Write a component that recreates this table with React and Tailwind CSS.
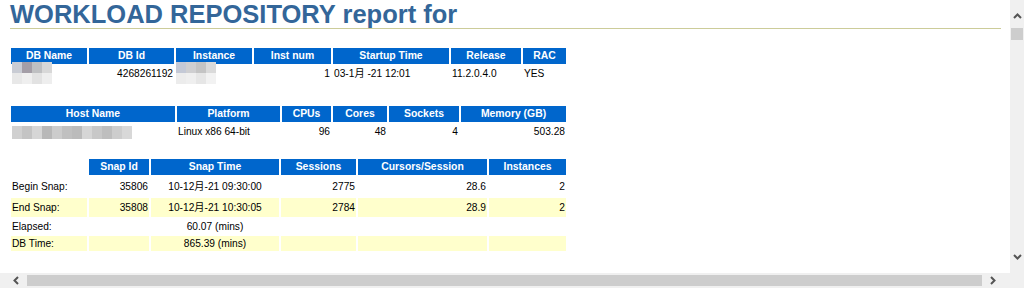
import React from 'react';

const FONT = { fontFamily: '"Liberation Sans", Arial, "Noto Sans CJK SC", sans-serif' };

const Chevron = ({ dir }) => {
  const d = {
    up: 'M1 6 L4.5 2.5 L8 6',
    down: 'M1 3 L4.5 6.5 L8 3',
    left: 'M6 1 L2.5 4.5 L6 8',
    right: 'M3 1 L6.5 4.5 L3 8',
  }[dir];
  return (
    <svg width="9" height="9" viewBox="0 0 9 9" className="block">
      <path d={d} fill="none" stroke="#555555" strokeWidth="2" />
    </svg>
  );
};

// pixelated redaction blocks, as in the screenshot
const Mosaic = ({ rows, size = 10, h }) => (
  <div className="flex flex-col blur-[0.6px]">
    {rows.map((r, i) => (
      <div key={i} className="flex">
        {r.map((c, j) => (
          <div key={j} style={{ background: c, width: size, height: h || size }} />
        ))}
      </div>
    ))}
  </div>
);

const Th = ({ children, empty }) => (
  <div
    className={
      empty
        ? 'h-[16px]'
        : 'h-[16px] bg-[#0066cc] text-white font-bold text-[10.4px] flex items-center justify-center whitespace-nowrap'
    }
  >
    {children}
  </div>
);

const Td = ({ children, align = 'left', h = 'h-[16px]', bg = '' }) => {
  const j = align === 'right' ? 'justify-end' : align === 'center' ? 'justify-center' : 'justify-start';
  return (
    <div className={`${h} ${bg} ${j} flex items-center px-[1px] text-[10.2px] text-black whitespace-nowrap`}>
      {children}
    </div>
  );
};

export default function App() {
  const Y = 'bg-[#ffffcc]';
  return (
    <div
      className="w-[1024px] h-[288px] grid grid-cols-[1010px_14px] grid-rows-[273px_15px] bg-white overflow-hidden"
      style={FONT}
    >
      <main className="overflow-hidden pl-[10px] pr-[9px]">
        <h1 className="text-[25.5px] leading-[28px] font-bold text-[#336699] border-b border-[#cccc99] whitespace-nowrap">
          WORKLOAD REPOSITORY report for
        </h1>

        {/* database / instance */}
        <div className="mt-[19px] ml-[1px] grid grid-cols-[76px_85px_76px_77px_116px_70px_43px] gap-[2px]">
          <Th>DB Name</Th>
          <Th>DB Id</Th>
          <Th>Instance</Th>
          <Th>Inst num</Th>
          <Th>Startup Time</Th>
          <Th>Release</Th>
          <Th>RAC</Th>
          <Td>
            <div className="-mt-[2px]">
              <Mosaic
                size={10}
                h={11}
                rows={[
                  ['#c9ccd4', '#a49ea7', '#bfc0c2', '#d8d8d8'],
                  ['#e8e8e8', '#efefef', '#e2e2e2', '#eeeeee'],
                ]}
              />
            </div>
          </Td>
          <Td align="right">4268261192</Td>
          <Td>
            <div className="-ml-[1px] -mt-[2px]">
              <Mosaic
                size={10}
                h={11}
                rows={[
                  ['#c4c9d6', '#cfcfd1', '#c4c4c4', '#dadada'],
                  ['#ececec', '#efefef', '#e6e6e6', '#f2f2f2'],
                ]}
              />
            </div>
          </Td>
          <Td align="right">1</Td>
          <Td>03-1月 -21 12:01</Td>
          <Td>11.2.0.4.0</Td>
          <Td>YES</Td>
        </div>

        {/* host */}
        <div className="mt-[24px] ml-[1px] grid grid-cols-[164px_103px_49px_54px_70px_105px] gap-[2px]">
          <Th>Host Name</Th>
          <Th>Platform</Th>
          <Th>CPUs</Th>
          <Th>Cores</Th>
          <Th>Sockets</Th>
          <Th>Memory (GB)</Th>
          <Td>
            <Mosaic
              h={13}
              rows={[
                ['#d0d0d0', '#c4c4c4', '#d6d6d6', '#b8b8b8', '#cccccc', '#c0c0c0', '#bbbbbb', '#d6d6d6', '#c8c8c8', '#bebebe', '#cdcdcd', '#d8d8d8'],
              ]}
            />
          </Td>
          <Td>Linux x86 64-bit</Td>
          <Td align="right">96</Td>
          <Td align="right">48</Td>
          <Td align="right">4</Td>
          <Td align="right">503.28</Td>
        </div>

        {/* snapshots */}
        <div className="mt-[19px] ml-[1px] grid grid-cols-[76px_60px_128px_75px_129px_77px] gap-[2px]">
          <Th empty />
          <Th>Snap Id</Th>
          <Th>Snap Time</Th>
          <Th>Sessions</Th>
          <Th>Cursors/Session</Th>
          <Th>Instances</Th>

          <Td h="h-[19px]">Begin Snap:</Td>
          <Td h="h-[19px]" align="right">35806</Td>
          <Td h="h-[19px]" align="center">10-12月-21 09:30:00</Td>
          <Td h="h-[19px]" align="right">2775</Td>
          <Td h="h-[19px]" align="right">28.6</Td>
          <Td h="h-[19px]" align="right">2</Td>

          <Td h="h-[19px]" bg={Y}>End Snap:</Td>
          <Td h="h-[19px]" bg={Y} align="right">35808</Td>
          <Td h="h-[19px]" bg={Y} align="center">10-12月-21 10:30:05</Td>
          <Td h="h-[19px]" bg={Y} align="right">2784</Td>
          <Td h="h-[19px]" bg={Y} align="right">28.9</Td>
          <Td h="h-[19px]" bg={Y} align="right">2</Td>

          <Td h="h-[15px]">Elapsed:</Td>
          <Td h="h-[15px]"></Td>
          <Td h="h-[15px]" align="center">60.07 (mins)</Td>
          <Td h="h-[15px]"></Td>
          <Td h="h-[15px]"></Td>
          <Td h="h-[15px]"></Td>

          <Td h="h-[15px]" bg={Y}>DB Time:</Td>
          <Td h="h-[15px]" bg={Y}></Td>
          <Td h="h-[15px]" bg={Y} align="center">865.39 (mins)</Td>
          <Td h="h-[15px]" bg={Y}></Td>
          <Td h="h-[15px]" bg={Y}></Td>
          <Td h="h-[15px]" bg={Y}></Td>
        </div>
      </main>

      {/* vertical scrollbar */}
      <div className="bg-[#f0f0f0] flex flex-col items-center pt-[12px] pb-[12px]">
        <Chevron dir="up" />
        <div className="mt-[7px] w-[12px] h-[12px] bg-[#cdcdcd]" />
        <div className="flex-1" />
        <Chevron dir="down" />
      </div>

      {/* horizontal scrollbar */}
      <div className="bg-[#f0f0f0] flex items-center pl-[12px]">
        <Chevron dir="left" />
        <div className="ml-[6px] w-[955px] h-[11px] bg-[#cdcdcd]" />
        <div className="ml-[6px]">
          <Chevron dir="right" />
        </div>
      </div>
      <div className="bg-[#f0f0f0]" />
    </div>
  );
}
